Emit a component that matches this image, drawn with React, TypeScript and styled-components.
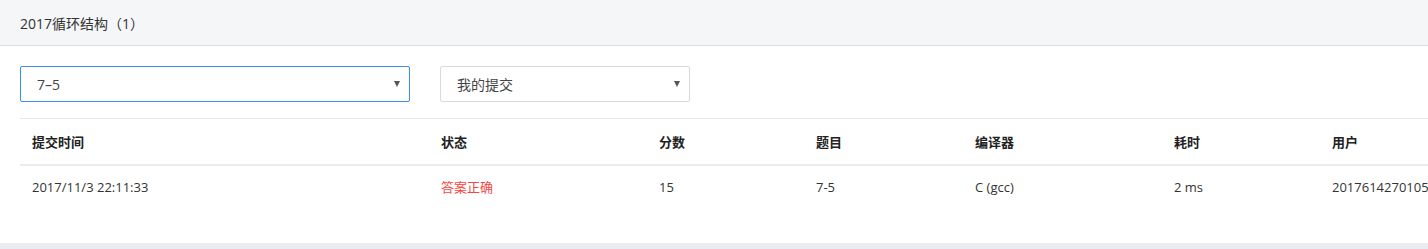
import React from "react";
import styled, { createGlobalStyle } from "styled-components";

const GlobalStyle = createGlobalStyle`
  html, body {
    margin: 0;
    padding: 0;
    background: #e9edf2;
    overflow: hidden;
  }
  body {
    font-family: "Open Sans", "Noto Sans CJK SC", sans-serif;
    color: #333;
  }
`;

const Panel = styled.div`
  width: 1428px;
  height: 243px;
  background: #fff;
  overflow: hidden;
`;

const PanelHeader = styled.div`
  height: 46px;
  background: #f5f6f8;
  border-bottom: 1px solid #dcdcdc;
  box-sizing: border-box;
  display: flex;
  align-items: center;
  padding: 0 20px;
  font-size: 14px;
  color: #333;
`;

const PanelBody = styled.div`
  padding: 20px 0 0 20px;
`;

const Filters = styled.div`
  display: flex;
  gap: 30px;
  padding-bottom: 16px;
`;

const SelectBox = styled.div<{ width: number; focused?: boolean }>`
  width: ${(p) => p.width}px;
  height: 36px;
  box-sizing: border-box;
  border: 1px solid ${(p) => (p.focused ? "#3d8ff0" : "#d9d9d9")};
  border-radius: 2px;
  display: flex;
  align-items: center;
  justify-content: space-between;
  padding: 0 8px 0 16px;
  font-size: 14px;
  color: #444;
`;

const Caret = styled.span`
  width: 0;
  height: 0;
  border-left: 3.5px solid transparent;
  border-right: 3.5px solid transparent;
  border-top: 6px solid #555;
  margin-right: 1px;
`;

const Table = styled.table`
  border-collapse: collapse;
  table-layout: fixed;
  width: 1500px;
  border-top: 1px solid #e8e8e8;
  font-size: 13px;
`;

const HeadCell = styled.th<{ width?: number }>`
  width: ${(p) => (p.width ? `${p.width}px` : "auto")};
  text-align: left;
  font-weight: 700;
  color: #222;
  height: 46px;
  padding: 0 12px;
  box-sizing: border-box;
  border-bottom: 2px solid #ebebeb;
`;

const Cell = styled.td<{ tone?: "error" | "success" }>`
  padding: 0 12px;
  height: 42px;
  color: ${(p) => (p.tone === "success" ? "#f5463f" : "#333")};
  white-space: nowrap;
`;

const columns = [
  { title: "提交时间", width: 409 },
  { title: "状态", width: 218 },
  { title: "分数", width: 157 },
  { title: "题目", width: 159 },
  { title: "编译器", width: 199 },
  { title: "耗时", width: 158 },
  { title: "用户", width: 200 },
];

const rows = [
  {
    time: "2017/11/3 22:11:33",
    status: "答案正确",
    score: "15",
    problem: "7-5",
    compiler: "C (gcc)",
    cost: "2 ms",
    user: "2017614270105",
  },
];

export default function App() {
  return (
    <>
      <GlobalStyle />
      <Panel>
        <PanelHeader>2017循环结构（1）</PanelHeader>
        <PanelBody>
          <Filters>
            <SelectBox width={390} focused>
              <span>7–5</span>
              <Caret />
            </SelectBox>
            <SelectBox width={250}>
              <span>我的提交</span>
              <Caret />
            </SelectBox>
          </Filters>
          <Table>
            <thead>
              <tr>
                {columns.map((c) => (
                  <HeadCell key={c.title} width={c.width}>
                    {c.title}
                  </HeadCell>
                ))}
              </tr>
            </thead>
            <tbody>
              {rows.map((r) => (
                <tr key={r.time}>
                  <Cell>{r.time}</Cell>
                  <Cell tone="success">{r.status}</Cell>
                  <Cell>{r.score}</Cell>
                  <Cell>{r.problem}</Cell>
                  <Cell>{r.compiler}</Cell>
                  <Cell>{r.cost}</Cell>
                  <Cell>{r.user}</Cell>
                </tr>
              ))}
            </tbody>
          </Table>
        </PanelBody>
      </Panel>
    </>
  );
}
